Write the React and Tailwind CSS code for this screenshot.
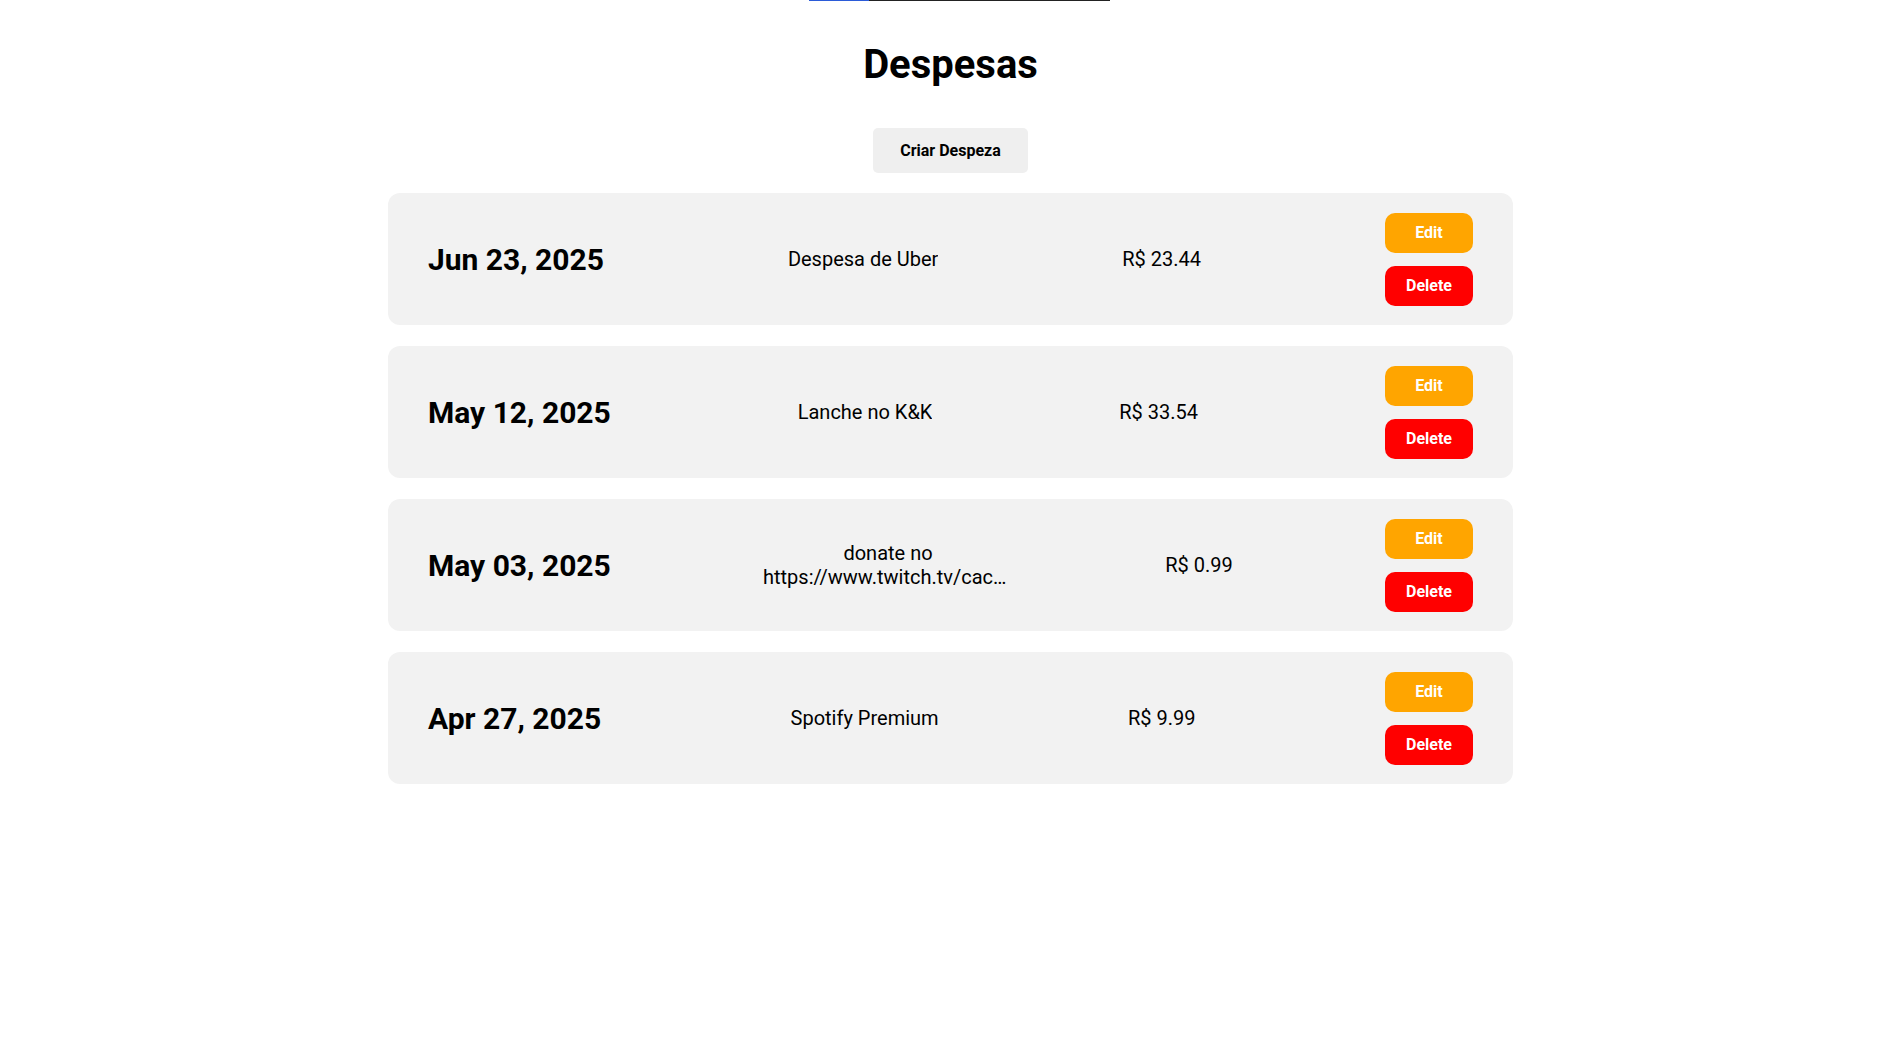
const expenses = [
  { id: 1, date: 'Jun 23, 2025', description: 'Despesa de Uber', amount: 'R$ 23.44' },
  { id: 2, date: 'May 12, 2025', description: 'Lanche no K&K', amount: 'R$ 33.54' },
  {
    id: 3,
    date: 'May 03, 2025',
    description: 'donate no https://www.twitch.tv/cacaudanadinha',
    amount: 'R$ 0.99',
  },
  { id: 4, date: 'Apr 27, 2025', description: 'Spotify Premium', amount: 'R$ 9.99' },
];

const ExpenseCard = ({ expense }) => (
  <div className="w-[1125px] h-[132px] bg-[#f2f2f2] rounded-[12px] flex items-center justify-between pl-[40px] pr-10">
    <h2 className="text-[30px] font-bold leading-[35px] text-black">{expense.date}</h2>

    {/* long descriptions get cut with an ellipsis */}
    <p className="max-w-[250px] text-[20px] leading-[24px] text-center overflow-hidden text-ellipsis text-black">
      {expense.description}
    </p>

    <p className="text-[20px] leading-[24px] text-black">{expense.amount}</p>

    <div className="flex flex-col gap-[13px]">
      <button className="w-[88px] h-[40px] rounded-[10px] bg-[#ffa500] text-white text-base font-bold">
        Edit
      </button>
      <button className="w-[88px] h-[40px] rounded-[10px] bg-[#ff0000] text-white text-base font-bold">
        Delete
      </button>
    </div>
  </div>
);

export default function App() {
  return (
    <div className="min-h-screen bg-white font-[Roboto,sans-serif] text-black">
      {/* bottom edge of the nav underline */}
      <div className="ml-[809px] w-[301px] h-px flex">
        <div className="w-[60px] bg-[#2b5bd8]" />
        <div className="flex-1 bg-[#222222]" />
      </div>

      <div className="flex flex-col items-center">
        <h1 className="mt-[40px] text-[40px] leading-[48px] font-bold">Despesas</h1>

        <button className="mt-[39px] w-[155px] h-[45px] rounded-[5px] bg-[#efefef] text-base font-bold text-black">
          Criar Despeza
        </button>

        <div className="mt-[20px] flex flex-col gap-[21px]">
          {expenses.map(e => (
            <ExpenseCard key={e.id} expense={e} />
          ))}
        </div>
      </div>
    </div>
  );
}
